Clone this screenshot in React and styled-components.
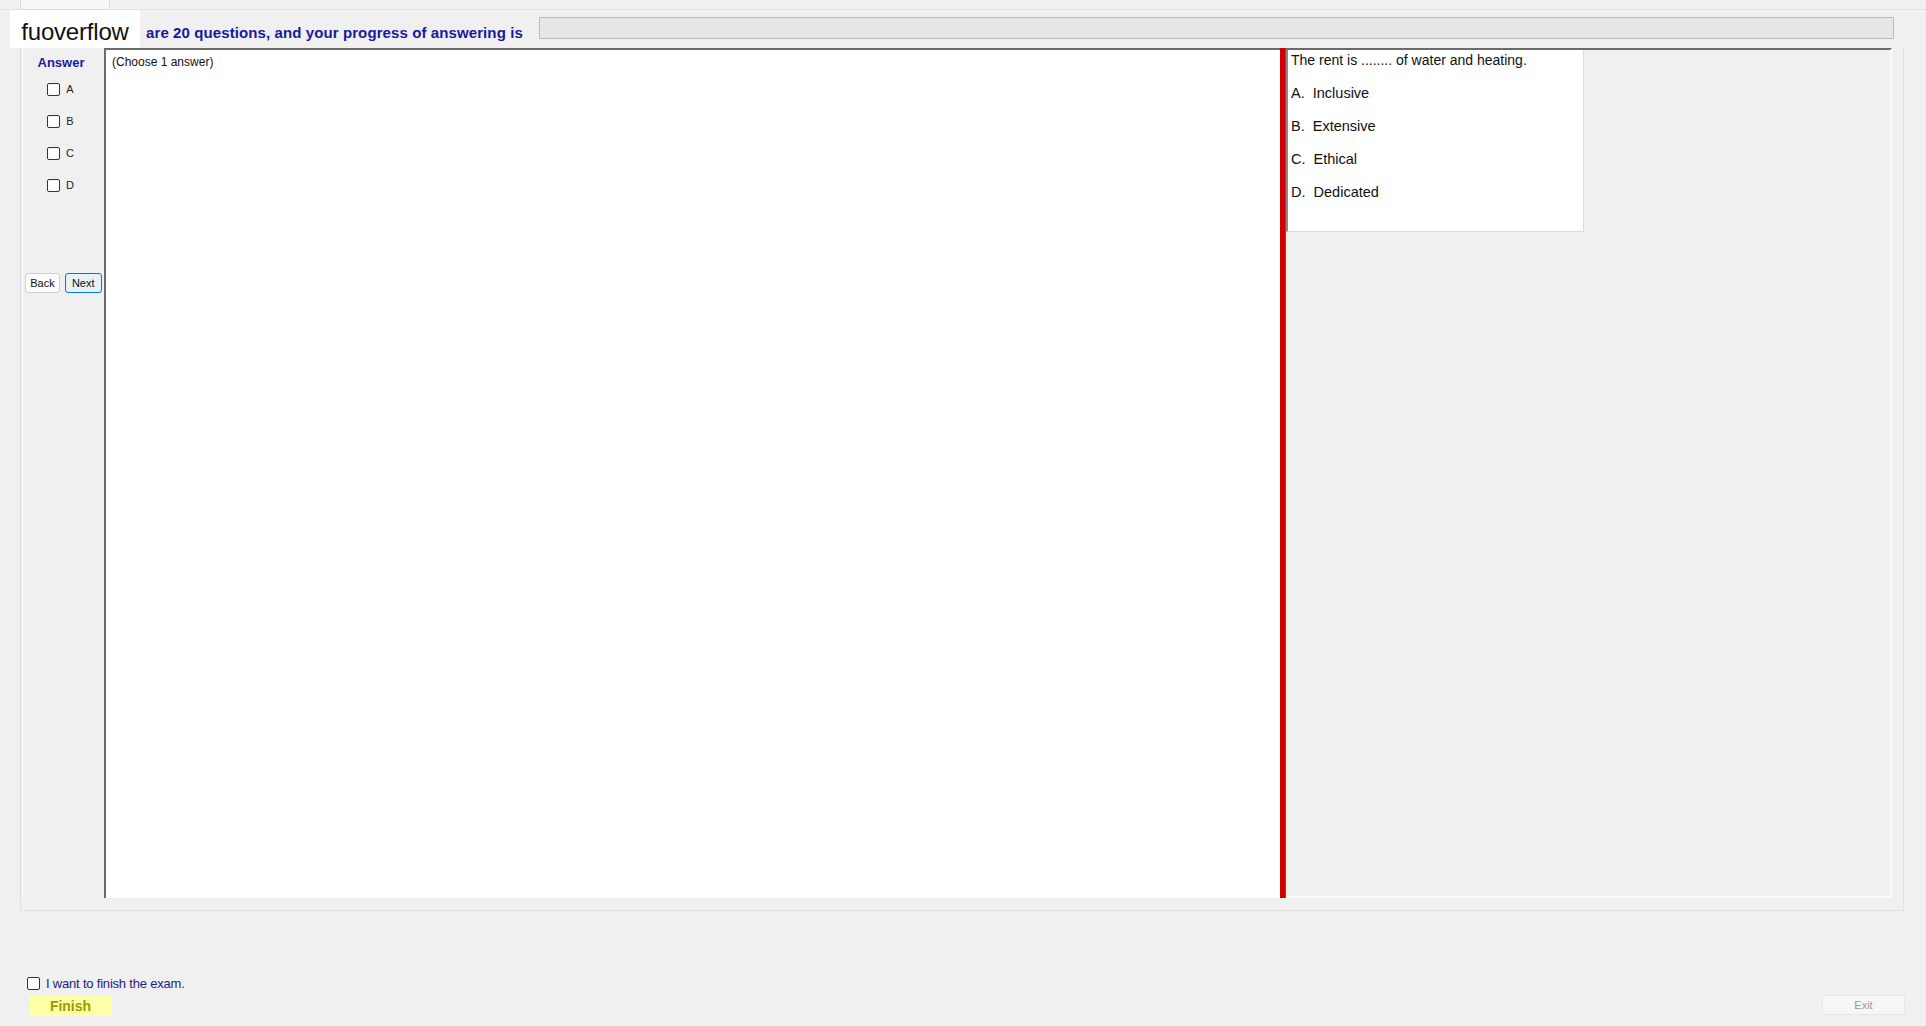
import React from 'react';
import styled, { createGlobalStyle } from 'styled-components';

const GlobalStyle = createGlobalStyle`
    html, body {
        margin: 0;
        padding: 0;
        background: #f0f0f0;
        font-family: "Liberation Sans", Arial, sans-serif;
    }
`;

const Page = styled.div`
    width: 1926px;
    height: 1026px;
    box-sizing: border-box;
    display: flex;
    flex-direction: column;
    background: #f0f0f0;
    overflow: hidden;
`;

const TabStrip = styled.div`
    height: 10px;
    box-sizing: border-box;
    border-bottom: 1px solid #e2e2e2;
    display: flex;
    padding-left: 20px;
`;

const Tab = styled.div`
    width: 90px;
    height: 10px;
    box-sizing: border-box;
    background: #f7f7f7;
    border: 1px solid #dadada;
    border-top: none;
`;

const Header = styled.div`
    height: 38px;
    display: flex;
    align-items: flex-start;
    padding-left: 10px;
`;

const Logo = styled.div`
    width: 130px;
    height: 38px;
    box-sizing: border-box;
    padding-top: 5px;
    background: #fff;
    font-size: 24px;
    color: #111;
    display: flex;
    align-items: center;
    justify-content: center;
    letter-spacing: -0.2px;
`;

const ProgressText = styled.div`
    margin: 14px 0 0 6px;
    font-size: 15px;
    font-weight: bold;
    color: #1818a0;
    white-space: nowrap;
    letter-spacing: 0.1px;
`;

const ProgressBar = styled.div`
    flex: 1;
    height: 22px;
    margin: 7px 32px 0 16px;
    box-sizing: border-box;
    background: #e6e6e6;
    border: 1px solid #bcbcbc;
`;

const GroupBox = styled.div`
    width: 1884px;
    margin-left: 20px;
    box-sizing: border-box;
    border: 1px solid #e0e0e0;
    border-top: none;
    padding: 0 11px 12px 1px;
`;

const ContentRow = styled.div`
    height: 850px;
    display: flex;
`;

const AnswerPanel = styled.div`
    width: 82px;
    box-sizing: border-box;
    border-left: 1px solid #fafafa;
    display: flex;
    flex-direction: column;
    align-items: center;
    padding-top: 7px;
`;

const AnswerTitle = styled.div`
    font-size: 13px;
    font-weight: bold;
    color: #1a1aa0;
    height: 18px;
    margin: 0 5px 0 0;
`;

const OptionRow = styled.label`
    display: flex;
    align-items: center;
    gap: 6px;
    height: 32px;
    margin-right: 6px;
    font-size: 11px;
    color: #222;
`;

const Check = styled.input.attrs({ type: 'checkbox' })`
    appearance: none;
    margin: 0;
    width: 13px;
    height: 13px;
    box-sizing: border-box;
    border: 1px solid #333;
    border-radius: 2px;
    background: #fff;
`;

const NavRow = styled.div`
    display: flex;
    gap: 5px;
    margin-top: 72px;
`;

const NavButton = styled.button`
    height: 20px;
    padding: 0 4px;
    font-family: inherit;
    font-size: 11px;
    color: #111;
    border-radius: 3px;
    border: 1px solid ${p => (p.$active ? '#0078d7' : '#d0d0d0')};
    background: ${p => (p.$active ? '#e5f1fb' : '#fdfdfd')};
    min-width: ${p => (p.$active ? '37px' : '34px')};
`;

const ChoiceArea = styled.div`
    width: 1176px;
    box-sizing: border-box;
    background: #fff;
    border-left: 2px solid #6b6b6b;
    border-top: 2px solid #6b6b6b;
    padding: 5px 6px;
    font-size: 12px;
    color: #111;
`;

const Divider = styled.div`
    width: 5px;
    background: #d00000;
    border-right: 1px solid #5a5a5a;
`;

const QuestionArea = styled.div`
    flex: 1;
    box-sizing: border-box;
    border-top: 2px solid #6b6b6b;
    border-right: 2px solid #fafafa;
    border-bottom: 2px solid #fafafa;
`;

const QuestionBox = styled.div`
    width: 298px;
    height: 182px;
    box-sizing: border-box;
    background: #fff;
    border-left: 2px solid #8a8a8a;
    border-right: 1px solid #dcdcdc;
    border-bottom: 1px solid #dcdcdc;
    padding: 2px 3px;
    font-size: 14px;
    color: #111;
`;

const QuestionText = styled.div`
    height: 22px;
    margin-bottom: 11px;
`;

const QuestionOption = styled.div`
    height: 33px;
    font-size: 14.5px;
    white-space: pre;
`;

const Footer = styled.div`
    flex: 1;
    display: flex;
    justify-content: space-between;
    align-items: flex-end;
    padding: 0 21px 10px 27px;
`;

const FinishColumn = styled.div`
    display: flex;
    flex-direction: column;
    gap: 5px;
`;

const ConfirmRow = styled.label`
    display: flex;
    align-items: center;
    gap: 6px;
    font-size: 13px;
    color: #1b1b8a;
    letter-spacing: -0.2px;
`;

const FinishButton = styled.button`
    width: 83px;
    height: 20px;
    margin-left: 2px;
    border: none;
    background: #ffffa8;
    font-family: inherit;
    font-size: 14px;
    font-weight: bold;
    color: #9a9a00;
`;

const ExitButton = styled.button`
    width: 83px;
    height: 20px;
    margin-bottom: 1px;
    box-sizing: border-box;
    border: 1px solid #e8e8e8;
    background: #f6f6f6;
    font-family: inherit;
    font-size: 11px;
    color: #9a9a9a;
`;

const OPTIONS = ['A', 'B', 'C', 'D'];
const QUESTION = {
    text: 'The rent is ........ of water and heating.',
    options: ['A.  Inclusive', 'B.  Extensive', 'C.  Ethical', 'D.  Dedicated'],
};

export default function App() {
    return (
        <Page>
            <GlobalStyle />
            <TabStrip>
                <Tab />
            </TabStrip>
            <Header>
                <Logo>fuoverflow</Logo>
                <ProgressText>are 20 questions, and your progress of answering is</ProgressText>
                <ProgressBar />
            </Header>
            <GroupBox>
                <ContentRow>
                    <AnswerPanel>
                        <AnswerTitle>Answer</AnswerTitle>
                        {OPTIONS.map(o => (
                            <OptionRow key={o}>
                                <Check />
                                {o}
                            </OptionRow>
                        ))}
                        <NavRow>
                            <NavButton>Back</NavButton>
                            <NavButton $active>Next</NavButton>
                        </NavRow>
                    </AnswerPanel>
                    <ChoiceArea>(Choose 1 answer)</ChoiceArea>
                    <Divider />
                    <QuestionArea>
                        <QuestionBox>
                            <QuestionText>{QUESTION.text}</QuestionText>
                            {QUESTION.options.map(o => (
                                <QuestionOption key={o}>{o}</QuestionOption>
                            ))}
                        </QuestionBox>
                    </QuestionArea>
                </ContentRow>
            </GroupBox>
            <Footer>
                <FinishColumn>
                    <ConfirmRow>
                        <Check />
                        I want to finish the exam.
                    </ConfirmRow>
                    <FinishButton>Finish</FinishButton>
                </FinishColumn>
                <ExitButton>Exit</ExitButton>
            </Footer>
        </Page>
    );
}
